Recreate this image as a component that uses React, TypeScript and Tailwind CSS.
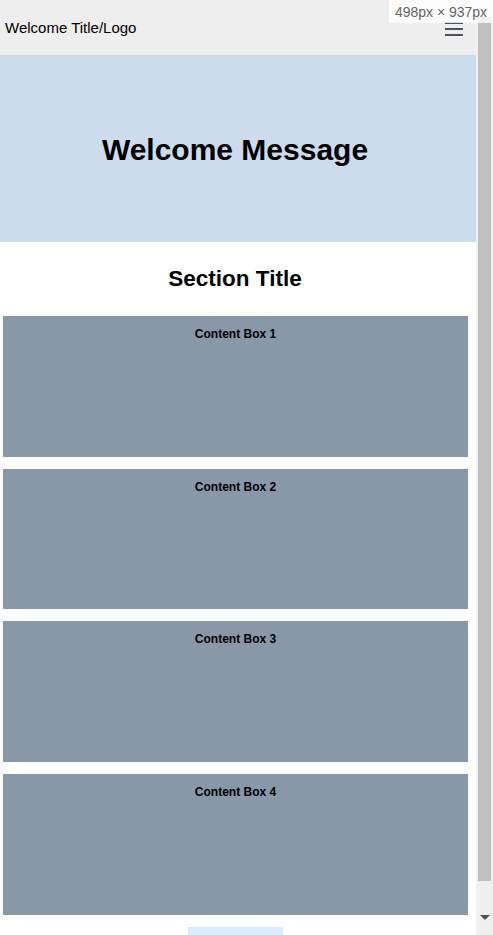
import React from 'react';

const boxes = ['Content Box 1', 'Content Box 2', 'Content Box 3', 'Content Box 4'];

const App: React.FC = () => {
  return (
    <div className="relative flex h-screen overflow-hidden bg-white font-['Liberation_Sans',Arial,sans-serif] text-black">
      <div className="w-[476px] shrink-0 overflow-hidden">
        <header className="flex h-[55px] items-center justify-between bg-[#eeeeee] pl-[5px] pr-[13px]">
          <p className="text-[15px] leading-none">Welcome Title/Logo</p>
          <button className="flex w-[18px] flex-col gap-[4px] pt-[2px]" aria-label="menu">
            <span className="block h-[2px] w-full bg-[#4a5264]" />
            <span className="block h-[2px] w-full bg-[#4a5264]" />
            <span className="block h-[2px] w-full bg-[#4a5264]" />
          </button>
        </header>

        <section className="flex h-[187px] items-center justify-center bg-[#ccdcec] pr-[6px]">
          <h1 className="pt-[2px] text-[30px] font-bold">Welcome Message</h1>
        </section>

        <main className="pb-[40px]">
          <h2 className="pt-[24px] pb-[24px] pr-[6px] text-center text-[22.5px] font-bold leading-[26px]">
            Section Title
          </h2>
          <div className="flex flex-col gap-[12px] pl-[3px] pr-[8px]">
            {boxes.map((label) => (
              <div key={label} className="h-[140.67px] bg-[#8898a8] pt-[11px] text-center">
                <p className="text-[12px] font-bold leading-[14px]">{label}</p>
              </div>
            ))}
          </div>
          <div className="mt-[12px] flex justify-center pr-[6px]">
            <button className="h-[40px] w-[95px] bg-[#dcecfc]" aria-label="more" />
          </div>
        </main>
      </div>

      {/* scrollbar strip */}
      <div className="flex w-[17px] shrink-0 flex-col items-center bg-[#f0f0f0]">
        <div className="flex h-[17px] items-center justify-center">
          <span className="block h-0 w-0 border-x-[4px] border-b-[4px] border-x-transparent border-b-[#a3a3a3]" />
        </div>
        <div className="ml-[2px] mr-[2px] h-[864px] w-[13px] bg-[#c0c0c0]" />
        <div className="flex-1" />
        <div className="flex h-[20px] items-start justify-center">
          <span className="block h-0 w-0 border-x-[5px] border-t-[5px] border-x-transparent border-t-[#505050]" />
        </div>
      </div>

      <div className="absolute right-0 top-0 flex h-[23px] w-[104px] items-center justify-center bg-white/80">
        <span className="text-[14px] leading-none text-[#666666]">498px × 937px</span>
      </div>
    </div>
  );
};

export default App;
